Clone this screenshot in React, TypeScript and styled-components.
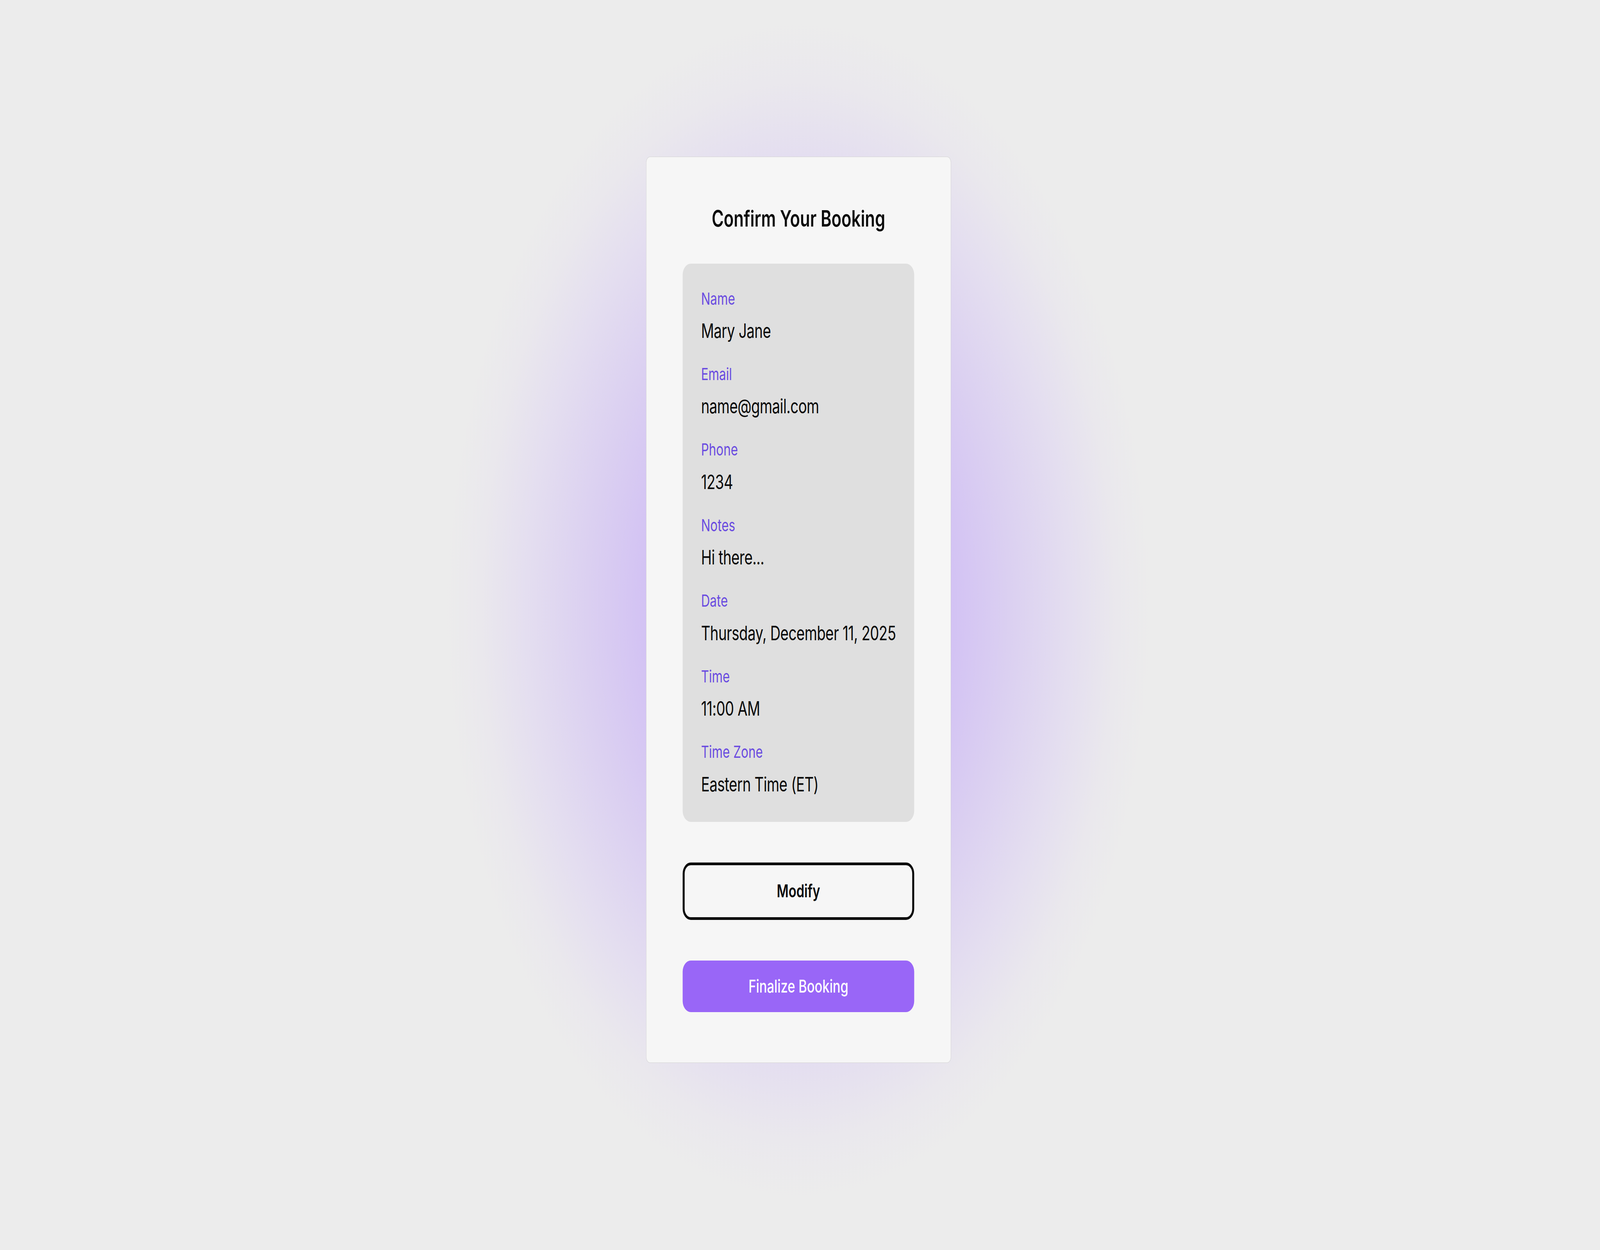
import React from "react";
import styled, { createGlobalStyle } from "styled-components";

// the reference is a ~1564px wide layout shot at a 5604px wide frame
const S = 5604 / 1564;
const px = (n: number) => `${(n * S).toFixed(2)}px`;
const FRAME_WIDTH = 1564 * S;

const GlobalStyle = createGlobalStyle`
  html, body {
    margin: 0;
    padding: 0;
  }
  body {
    background: #ececec;
    font-family: "Inter", "Noto Sans", sans-serif;
    color: #0a0a0a;
    overflow: hidden;
  }
  * {
    box-sizing: border-box;
  }
`;

interface Field {
  label: string;
  value: string;
}

const fields: Field[] = [
  { label: "Name", value: "Mary Jane" },
  { label: "Email", value: "name@gmail.com" },
  { label: "Phone", value: "1234" },
  { label: "Notes", value: "Hi there..." },
  { label: "Date", value: "Thursday, December 11, 2025" },
  { label: "Time", value: "11:00 AM" },
  { label: "Time Zone", value: "Eastern Time (ET)" },
];

const App = () => {
  // the window may be narrower than the 5604px frame; fit the frame to it
  const fit =
    typeof window !== "undefined" ? window.innerWidth / FRAME_WIDTH : 1;

  return (
    <>
      <GlobalStyle />
      <Viewport>
        <Stage style={{ transform: `scaleX(${fit})` }}>
          <Card>
            <Title>Confirm Your Booking</Title>

            <Summary>
              {fields.map((f) => (
                <SummaryItem key={f.label}>
                  <ItemLabel>{f.label}</ItemLabel>
                  <ItemValue>{f.value}</ItemValue>
                </SummaryItem>
              ))}
            </Summary>

            <OutlineButton type="button">Modify</OutlineButton>
            <PrimaryButton type="button">Finalize Booking</PrimaryButton>
          </Card>
        </Stage>
      </Viewport>
    </>
  );
};

export default App;

const Viewport = styled.div`
  width: 100vw;
  height: 100vh;
  overflow: hidden;
`;

const Stage = styled.main`
  width: ${FRAME_WIDTH}px;
  height: 100vh;
  transform-origin: 0 0;
  display: flex;
  justify-content: center;
  align-items: flex-start;
  padding-top: ${px(112)};
  padding-right: ${px(3)};
  background:
    radial-gradient(
      ellipse ${px(345)} ${px(420)} at 49.9% 48.8%,
      #c3abf6 0%,
      #d2c1f4 42%,
      #dbd0f1 60%,
      #e4def0 77%,
      #eae8ed 90%,
      rgba(236, 236, 236, 0) 100%
    ),
    #ececec;
`;

const Card = styled.section`
  width: ${px(298)};
  display: flex;
  flex-direction: column;
  background-color: #f6f6f6;
  border: ${px(0.5)} solid rgba(0, 0, 0, 0.14);
  border-radius: ${px(4)};
  padding: ${px(32)} ${px(35.5)} ${px(36)};
`;

const Title = styled.h1`
  margin: 0 0 ${px(20)};
  text-align: center;
  font-size: ${px(16)};
  line-height: ${px(24)};
  font-weight: 600;
  color: #0a0a0a;
`;

const Summary = styled.div`
  display: flex;
  flex-direction: column;
  gap: ${px(13)};
  background-color: #dfdfdf;
  border-radius: ${px(8)};
  padding: ${px(17)} ${px(18)} ${px(17)};
`;

const SummaryItem = styled.div`
  display: flex;
  flex-direction: column;
  gap: ${px(5)};
`;

const ItemLabel = styled.span`
  font-size: ${px(12)};
  line-height: ${px(16)};
  color: #6a4be0;
`;

const ItemValue = styled.span`
  font-size: ${px(14)};
  line-height: ${px(20)};
  letter-spacing: -0.015em;
  white-space: nowrap;
  color: #0a0a0a;
`;

const BaseButton = styled.button`
  width: 100%;
  margin-top: ${px(29)};
  border-radius: ${px(8)};
  font-family: inherit;
  font-size: ${px(12.5)};
  cursor: pointer;
`;

const OutlineButton = styled(BaseButton)`
  height: ${px(41)};
  background: transparent;
  border: ${px(2)} solid #0a0a0a;
  color: #0a0a0a;
  font-weight: 600;
`;

const PrimaryButton = styled(BaseButton)`
  height: ${px(37)};
  background-color: #9966f7;
  border: none;
  color: #ffffff;
  font-weight: 500;
`;
